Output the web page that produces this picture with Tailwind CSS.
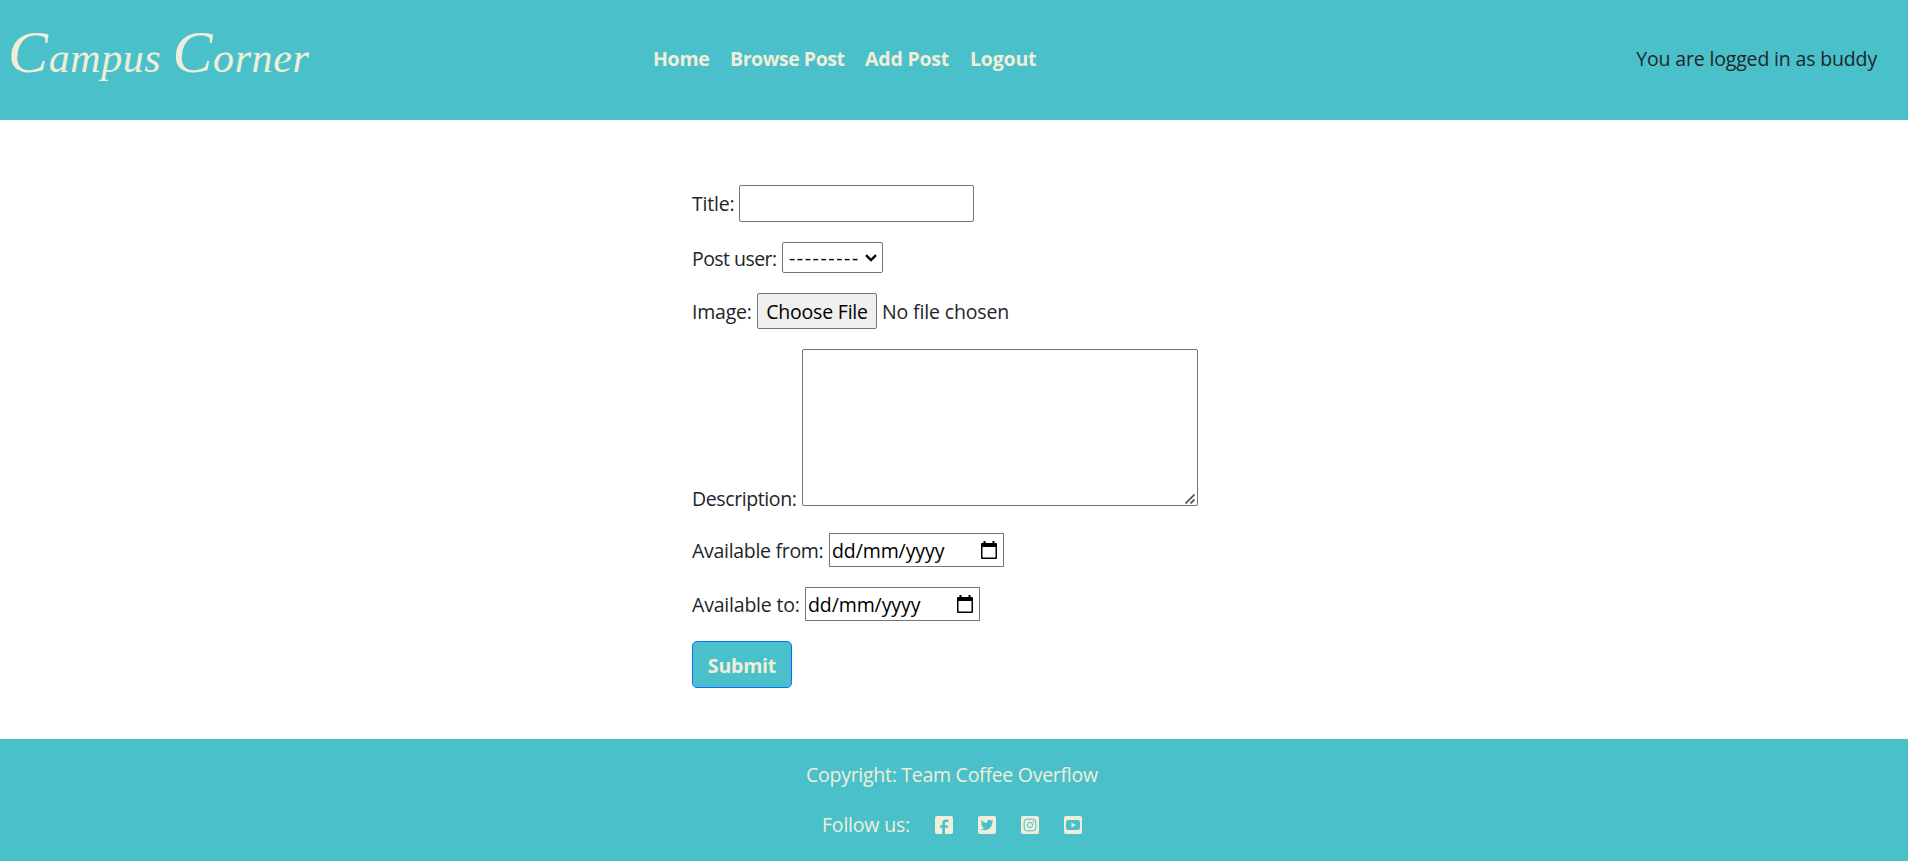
<!DOCTYPE html>
<html lang="en">
<head>
<meta charset="utf-8">
<title>Campus Corner</title>
<script src="https://cdn.jsdelivr.net/npm/@tailwindcss/browser@4"></script>
</head>
<body class="h-[861px] overflow-hidden bg-white flex flex-col font-['Open_Sans',sans-serif] text-[19.5px] leading-[30px] text-[#212529] whitespace-nowrap">
<header class="h-[120px] shrink-0 bg-[#4ac1ca] flex items-center text-[#f0eed9]">
  <a class="w-[653px] pl-[8px] pb-[11px] font-['Liberation_Serif',serif] italic text-[42px] leading-[60px] tracking-[0.6px]"><span class="text-[60px]">C</span>ampus <span class="text-[60px]">C</span>orner</a>
  <nav class="flex font-bold pb-[2px]">
    <a class="w-[77px]"><span class="tracking-[-0.3px]">Home</span></a>
    <a class="w-[135px]"><span class="tracking-[-0.45px]">Browse Post</span></a>
    <a class="w-[105px]"><span class="tracking-[-0.2px]">Add Post</span></a>
    <a><span class="tracking-[-0.2px]">Logout</span></a>
  </nav>
  <p class="ml-auto mr-[31px] pb-[2px] text-[#212529]"><span class="tracking-[-0.16px]">You are logged in as buddy</span></p>
</header>
<main class="h-[619px] shrink-0 pl-[692px] pt-[65px]">
  <form class="flex flex-col items-start">
    <div class="flex items-center mb-5"><label class="w-[47px]"><span class="tracking-[-0.2px]">Title:</span></label><input class="w-[235px] h-[37px] border border-[#767676] rounded-[2px]"></div>
    <div class="flex items-center mb-5 h-[31px]"><label class="w-[90px] pt-[2px]"><span class="tracking-[-0.55px]">Post user:</span></label>
      <div class="w-[101px] h-[31px] border border-[#767676] rounded-[2px] flex items-center text-black pl-[6px]"><span class="w-[76px] pt-px tracking-[1.6px]">---------</span><svg class="w-3 h-2" viewBox="0 0 12 8" fill="none" stroke="black" stroke-width="2.4"><path d="M1 1.2 6 6 11 1.2"/></svg></div></div>
    <div class="flex items-center mb-5"><label class="w-[65px] pt-[2px]"><span class="tracking-[-0.2px]">Image:</span></label><button type="button" class="w-[120px] h-[36px] pt-px border border-[#767676] rounded-[2px] bg-[#efefef] text-black mr-[5px]"><span class="tracking-[-0.2px]">Choose File</span></button><span class="pt-[2px] tracking-[-0.15px]">No file chosen</span></div>
    <div class="flex items-end h-[164px] mb-5"><label class="w-[110px] h-[29px]"><span class="tracking-[-0.4px]">Description:</span></label>
      <div class="relative w-[396px] h-[157px] mb-[7px]"><textarea class="block w-full h-full border border-[#767676] rounded-[2px] resize-none"></textarea>
        <svg class="absolute right-[3px] bottom-[2px] w-[10px] h-[10px]" viewBox="0 0 10 10" stroke="#55555a" stroke-width="1.8"><path d="M.5 9.500 9.500.5M5.500 9.500l4-4"/></svg></div></div>
    <div class="flex items-center mb-5"><label class="w-[137px] pt-[2px]"><span class="tracking-[-0.3px]">Available from:</span></label>
      <div class="w-[175px] h-[34px] border border-[#767676] flex items-center text-black pl-[2px] pr-[6px] justify-between"><span class="pt-[2px] tracking-[-0.1px]">dd/mm/yyyy</span><svg class="w-4 h-[18px] mb-px" viewBox="0 0 16 18"><path d="M2.500 0h2v2h7V0h2v2H15q1 0 1 1v14q0 1-1 1H1q-1 0-1-1V3q0-1 1-1h1.500zM1.500 6v10.500h13V6z"/></svg></div></div>
    <div class="flex items-center mb-5"><label class="w-[113px] pt-[2px]"><span class="tracking-[-0.2px]">Available to:</span></label>
      <div class="w-[175px] h-[34px] border border-[#767676] flex items-center text-black pl-[2px] pr-[6px] justify-between"><span class="pt-[2px] tracking-[-0.1px]">dd/mm/yyyy</span><svg class="w-4 h-[18px] mb-px" viewBox="0 0 16 18"><path d="M2.500 0h2v2h7V0h2v2H15q1 0 1 1v14q0 1-1 1H1q-1 0-1-1V3q0-1 1-1h1.500zM1.500 6v10.500h13V6z"/></svg></div></div>
    <button type="button" class="w-[100px] h-[47px] pt-[2px] rounded-[5px] border border-[#0d6efd] bg-[#4ac1ca] text-[#f0eed9] font-bold"><span class="tracking-[-0.2px]">Submit</span></button>
  </form>
</main>
<footer class="h-[122px] shrink-0 bg-[#4ac1ca] text-[#f0eed9] pt-[21px]">
  <p class="pl-[806px] mb-5"><span class="tracking-[-0.27px]">Copyright: Team Coffee Overflow</span></p>
  <div class="flex items-center pl-[822px]"><span class="w-[113px] tracking-[-0.2px]">Follow us:</span>
    <div class="flex gap-[25px]">
    <svg class="w-[18px] h-[18px]" viewBox="0 0 18 18"><rect width="18" height="18" rx="2" fill="#f0eed9"/><path fill="#4ac1ca" d="M7.300 18v-6.200H5V9.200h2.300V7.300c0-2.400 1.300-3.700 3.500-3.700.8 0 1.700.2 1.700.2h1V6h-2.100c-1.100 0-1.400.7-1.400 1.400v1.800h3.100l-.4 2.600h-2.700V18z"/></svg>
    <svg class="w-[18px] h-[18px]" viewBox="0 0 448 448"><path fill="#f0eed9" d="M400 0H48C21.500 0 0 21.500 0 48v352c0 26.500 21.500 48 48 48h352c26.500 0 48-21.500 48-48V48c0-26.500-21.500-48-48-48zm-48.900 158.800c.2 2.800.2 5.700.2 8.500 0 86.700-66 186.600-186.600 186.600-37.200 0-71.700-10.800-100.700-29.400 5.300.6 10.400.8 15.800.8 30.700 0 58.900-10.400 81.400-28-28.800-.6-53-19.500-61.300-45.500 10.100 1.500 19.200 1.500 29.600-1.200-30-6.100-52.500-32.500-52.500-64.400v-.8c8.700 4.900 18.900 7.900 29.600 8.300a65.447 65.447 0 0 1-29.200-54.600c0-12.200 3.200-23.400 8.900-33.100 32.300 39.800 80.800 65.800 135.200 68.600-9.300-44.500 24-80.600 64-80.600 18.900 0 35.900 7.900 47.900 20.700 14.800-2.800 29-8.300 41.600-15.800-4.900 15.200-15.200 28-28.800 36.100 13.200-1.400 26-5.100 37.800-10.200-8.900 13.100-20.100 24.700-32.900 34z"/></svg>
    <svg class="w-[18px] h-[18px]" viewBox="0 0 18 18"><rect width="18" height="18" rx="2" fill="#f0eed9"/><g fill="none" stroke="#4ac1ca"><rect x="3.200" y="3.200" width="11.600" height="11.600" rx="3" stroke-width="1"/><circle cx="9" cy="9" r="2.600" stroke-width="1"/></g><circle cx="12.200" cy="5.800" r=".7" fill="#4ac1ca"/></svg>
    <svg class="w-[18px] h-[18px]" viewBox="0 0 18 18"><rect width="18" height="18" rx="2" fill="#f0eed9"/><rect x="2" y="4.100" width="14" height="9.800" rx="2.200" fill="#4ac1ca"/><path fill="#f0eed9" d="m7.500 6.600 4.200 2.400-4.200 2.400z"/></svg>
    </div>
  </div>
</footer>
</body>
</html>
